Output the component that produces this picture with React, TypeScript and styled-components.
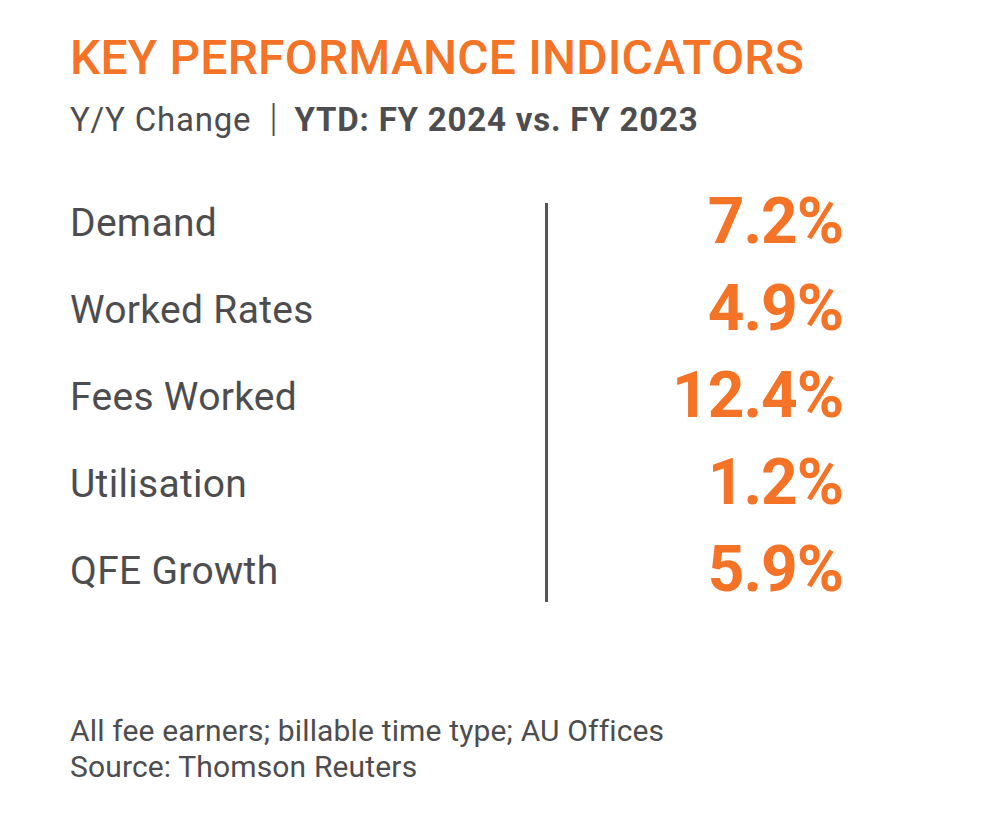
import styled, { createGlobalStyle } from "styled-components";

const GlobalStyle = createGlobalStyle`
  html, body {
    margin: 0;
    padding: 0;
    background: #ffffff;
  }
  body {
    font-family: Roboto, "Liberation Sans", sans-serif;
    color: #4d4d4f;
  }
`;

const kpis = [
  { label: "Demand", value: "7.2%" },
  { label: "Worked Rates", value: "4.9%" },
  { label: "Fees Worked", value: "12.4%" },
  { label: "Utilisation", value: "1.2%" },
  { label: "QFE Growth", value: "5.9%" },
];

const App = () => {
  return (
    <>
      <GlobalStyle />
      <Page>
        <Title>KEY PERFORMANCE INDICATORS</Title>
        <Subtitle>
          Y/Y Change<Sep>|</Sep><strong>YTD: FY 2024 vs. FY 2023</strong>
        </Subtitle>
        <Table>
          <Labels>
            {kpis.map((k) => (
              <Label key={k.label}>{k.label}</Label>
            ))}
          </Labels>
          <Divider />
          <Values>
            {kpis.map((k) => (
              <Value key={k.label}>{k.value}</Value>
            ))}
          </Values>
        </Table>
        <Footer>
          <div>All fee earners; billable time type; AU Offices</div>
          <div>Source: Thomson Reuters</div>
        </Footer>
      </Page>
    </>
  );
};

const Page = styled.div`
  width: 1007px;
  height: 814px;
  box-sizing: border-box;
  padding: 28px 0 0 70px;
  display: flex;
  flex-direction: column;
`;

const Title = styled.h1`
  margin: 0;
  font-size: 48px;
  font-weight: 500;
  line-height: 60px;
  letter-spacing: 0.2px;
  color: #f47327;
`;

const Subtitle = styled.div`
  margin-top: 12px;
  font-size: 33px;
  line-height: 40px;
  letter-spacing: 0.8px;
  color: #4d4d4f;
  display: flex;
  align-items: center;

  strong {
    font-weight: 700;
  }
`;

const Sep = styled.span`
  font-weight: 300;
  font-size: 38px;
  margin: -4px 16px 0 18px;
`;

const Table = styled.div`
  margin-top: 38px;
  width: 773px;
  display: grid;
  grid-template-columns: 475px 3px 1fr;
`;

const Labels = styled.div`
  display: flex;
  flex-direction: column;
  padding-top: 2px;
`;

const Label = styled.div`
  font-size: 39px;
  line-height: 87px;
  height: 87px;
  color: #4d4d4f;
  letter-spacing: 0.3px;
`;

const Divider = styled.div`
  background: #555557;
  margin-top: 25px;
  height: 399px;
`;

const Values = styled.div`
  display: flex;
  flex-direction: column;
  align-items: flex-end;
`;

const Value = styled.div`
  font-size: 64px;
  font-weight: 700;
  line-height: 87px;
  height: 87px;
  color: #f47327;
  letter-spacing: -1px;
`;

const Footer = styled.div`
  margin-top: 98px;
  font-size: 30px;
  line-height: 36px;
  letter-spacing: 0.15px;
  color: #4d4d4f;
`;

export default App;
